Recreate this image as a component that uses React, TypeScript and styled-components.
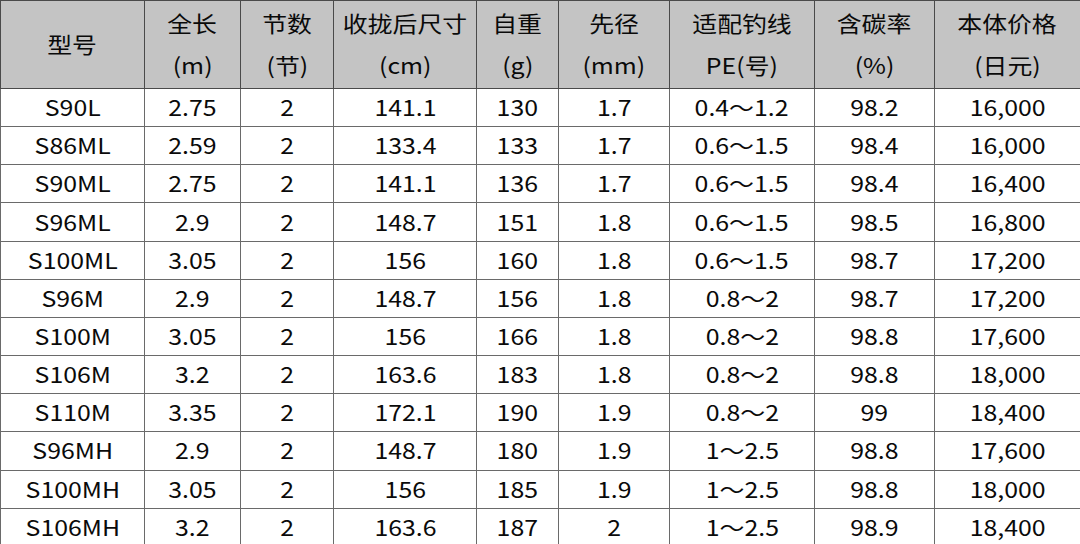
import React from 'react';
import styled, { createGlobalStyle } from 'styled-components';

const GlobalStyle = createGlobalStyle`
  html, body {
    margin: 0;
    padding: 0;
    background: #ffffff;
  }
  body {
    font-family: "Noto Sans CJK SC", "Noto Sans", sans-serif;
    color: #0a0a0a;
  }
`;

type Col = { title: string; unit?: string; width: number };

const columns: Col[] = [
  { title: '型号', width: 144 },
  { title: '全长', unit: '(m)', width: 96 },
  { title: '节数', unit: '(节)', width: 93 },
  { title: '收拢后尺寸', unit: '(cm)', width: 143 },
  { title: '自重', unit: '(g)', width: 82 },
  { title: '先径', unit: '(mm)', width: 111 },
  { title: '适配钓线', unit: 'PE(号)', width: 145 },
  { title: '含碳率', unit: '(%)', width: 120 },
  { title: '本体价格', unit: '(日元)', width: 146 },
];

const rows: string[][] = [
  ['S90L', '2.75', '2', '141.1', '130', '1.7', '0.4〜1.2', '98.2', '16,000'],
  ['S86ML', '2.59', '2', '133.4', '133', '1.7', '0.6〜1.5', '98.4', '16,000'],
  ['S90ML', '2.75', '2', '141.1', '136', '1.7', '0.6〜1.5', '98.4', '16,400'],
  ['S96ML', '2.9', '2', '148.7', '151', '1.8', '0.6〜1.5', '98.5', '16,800'],
  ['S100ML', '3.05', '2', '156', '160', '1.8', '0.6〜1.5', '98.7', '17,200'],
  ['S96M', '2.9', '2', '148.7', '156', '1.8', '0.8〜2', '98.7', '17,200'],
  ['S100M', '3.05', '2', '156', '166', '1.8', '0.8〜2', '98.8', '17,600'],
  ['S106M', '3.2', '2', '163.6', '183', '1.8', '0.8〜2', '98.8', '18,000'],
  ['S110M', '3.35', '2', '172.1', '190', '1.9', '0.8〜2', '99', '18,400'],
  ['S96MH', '2.9', '2', '148.7', '180', '1.9', '1〜2.5', '98.8', '17,600'],
  ['S100MH', '3.05', '2', '156', '185', '1.9', '1〜2.5', '98.8', '18,000'],
  ['S106MH', '3.2', '2', '163.6', '187', '2', '1〜2.5', '98.9', '18,400'],
];

const Table = styled.table`
  width: 1080px;
  table-layout: fixed;
  border-collapse: collapse;
  font-size: 22px;
`;

const HeadCell = styled.th`
  height: 81px;
  padding: 0 0 3px;
  background: #c4c4c4;
  font-weight: 400;
  text-align: center;
  vertical-align: middle;
  line-height: 42px;
  border: 1.5px solid #4a4a4a;
`;

const Cell = styled.td`
  height: 34.17px;
  padding: 0 0 3px;
  text-align: center;
  vertical-align: middle;
  line-height: 34px;
  border: 1.5px solid #6a6a6a;
`;

/* the source picture is stretched sideways a little */
const Wide = styled.span`
  display: inline-block;
  white-space: nowrap;
  transform: scaleX(1.13);
`;

const Line = styled.div`
  white-space: nowrap;
`;

export default function App() {
  return (
    <>
      <GlobalStyle />
      <Table>
        <colgroup>
          {columns.map((c) => (
            <col key={c.title} style={{ width: c.width }} />
          ))}
        </colgroup>
        <thead>
          <tr>
            {columns.map((c) => (
              <HeadCell key={c.title}>
                <Line>
                  <Wide>{c.title}</Wide>
                </Line>
                {c.unit && (
                  <Line>
                    <Wide>{c.unit}</Wide>
                  </Line>
                )}
              </HeadCell>
            ))}
          </tr>
        </thead>
        <tbody>
          {rows.map((r) => (
            <tr key={r[0]}>
              {r.map((v, i) => (
                <Cell key={i}>
                  <Wide>{v}</Wide>
                </Cell>
              ))}
            </tr>
          ))}
        </tbody>
      </Table>
    </>
  );
}
